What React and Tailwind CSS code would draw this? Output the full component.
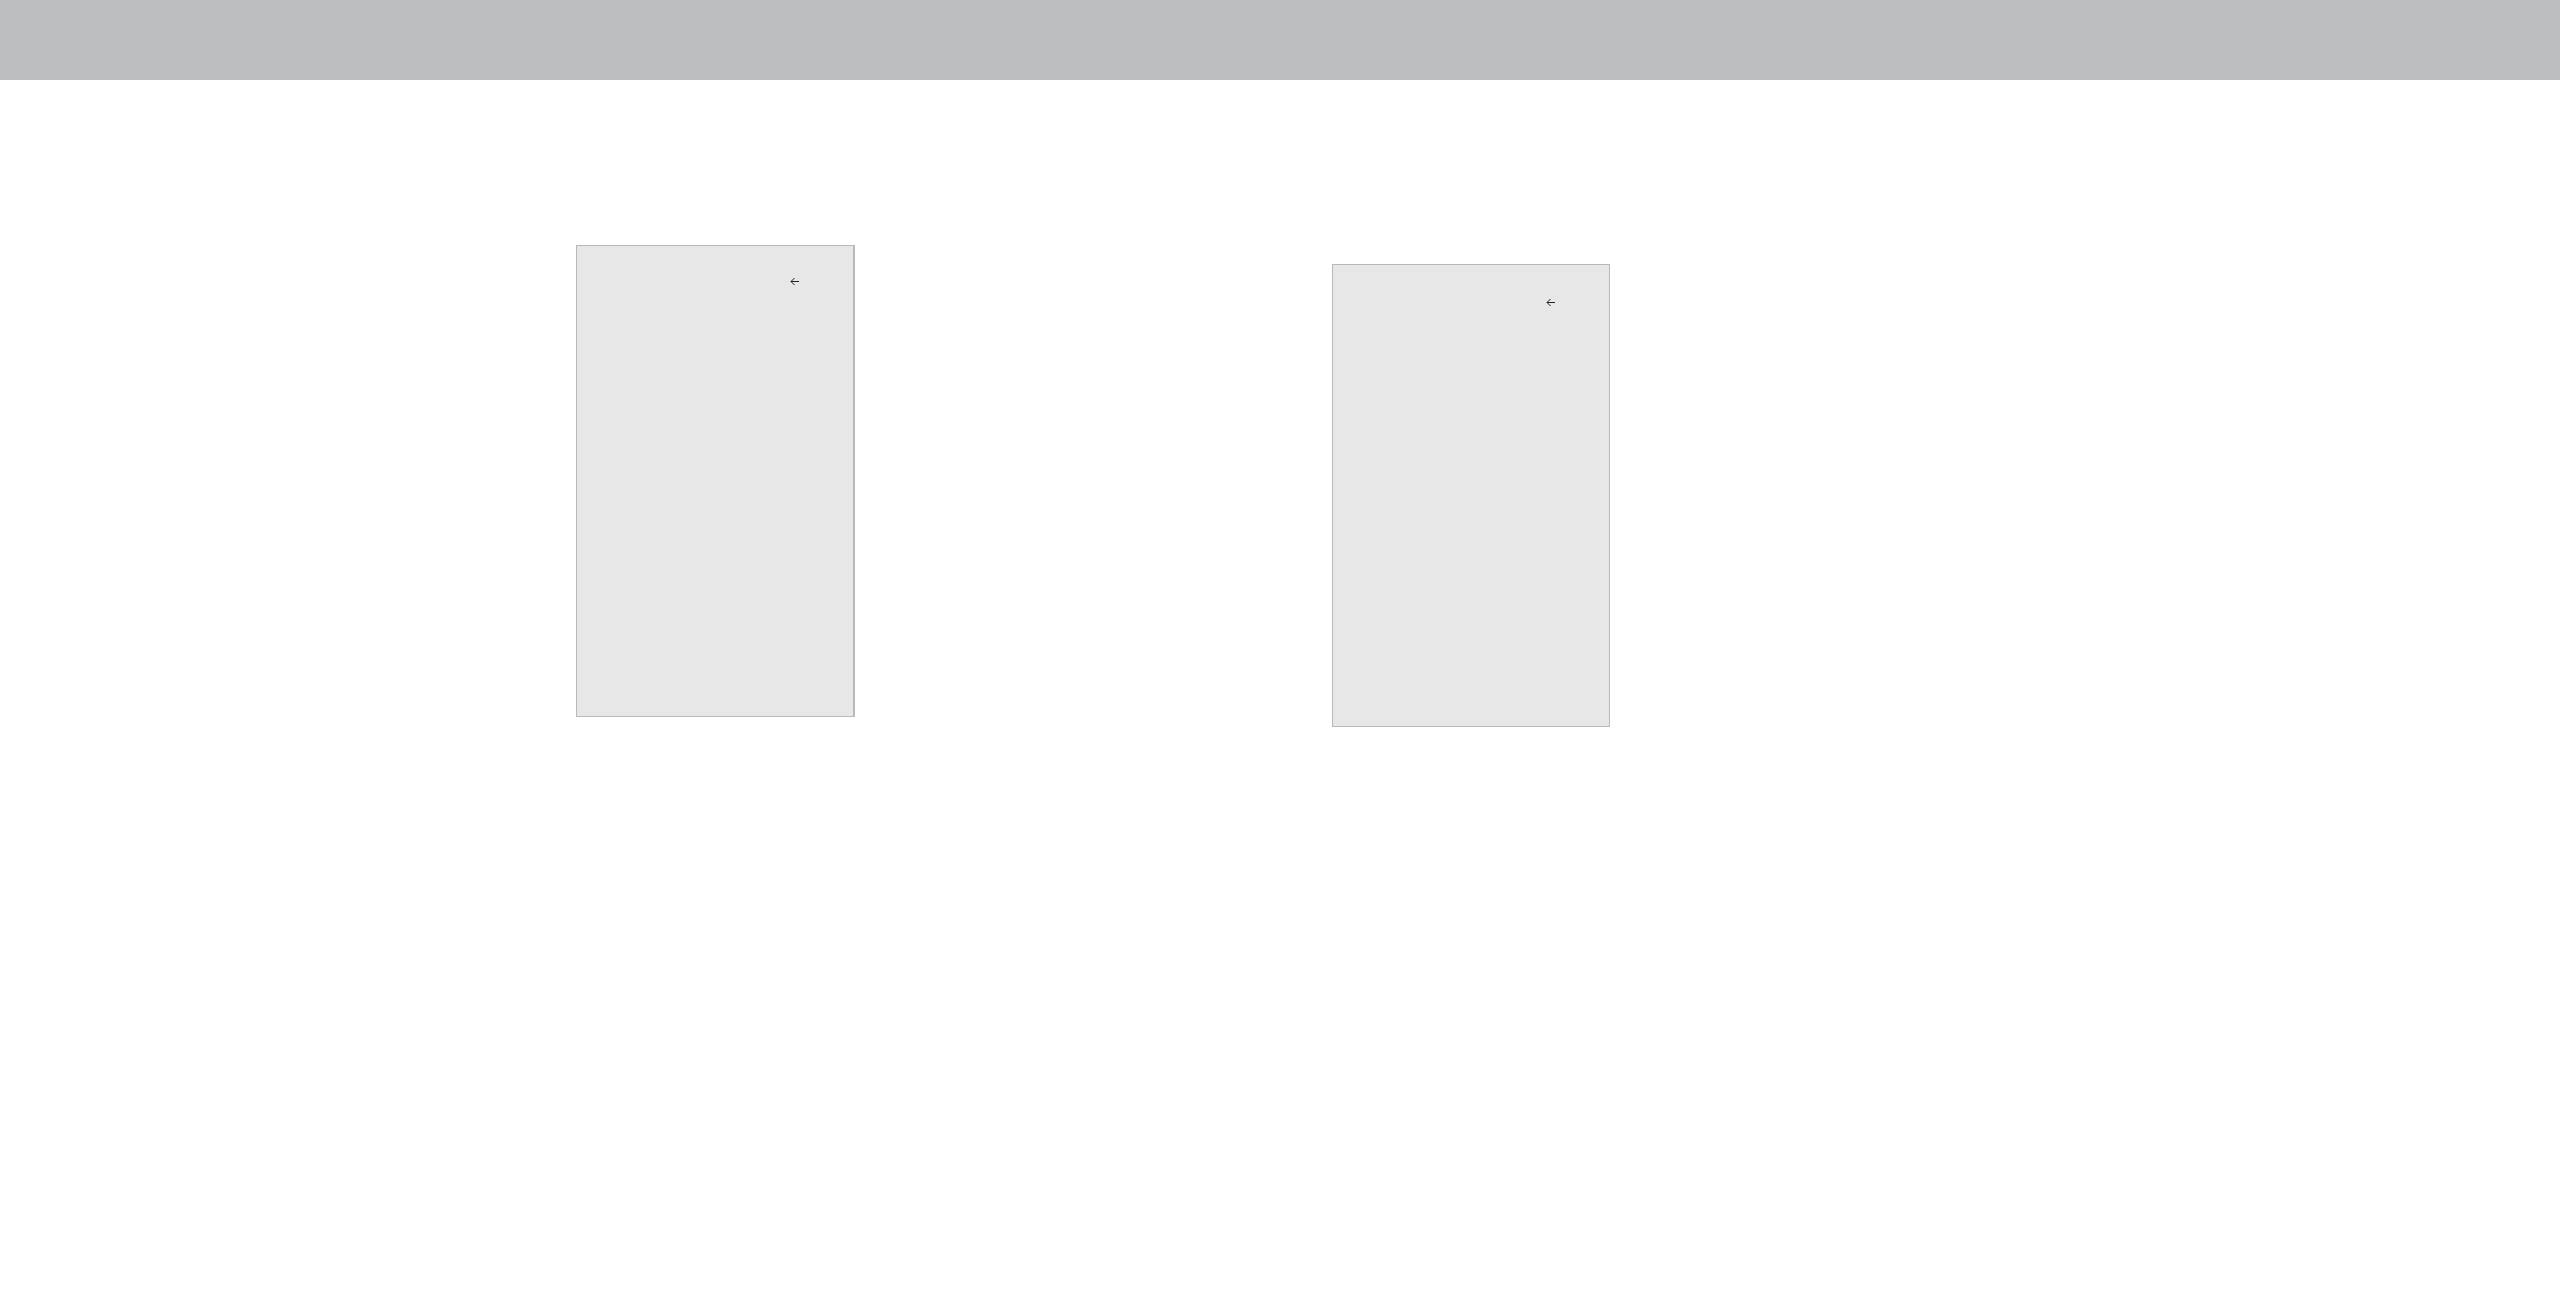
function ArrowLeft() {
  return (
    <svg width="9" height="9" viewBox="0 0 9 9" fill="none" stroke="#222" aria-hidden="true">
      <path d="M1 4.5H9" strokeWidth="1" />
      <path d="M4.5 1L1 4.5L4.5 8" strokeWidth="1" />
    </svg>
  );
}

function Panel({ className }) {
  return (
    <section className={`flex items-start justify-end border border-[#b9b9b9] bg-[#e7e7e7] ${className}`}>
      <button type="button" aria-label="Back" className="block">
        <ArrowLeft />
      </button>
    </section>
  );
}

export default function App() {
  return (
    <div className="min-h-screen bg-white">
      <header className="h-20 bg-[#bdbec0]" />
      <main className="grid grid-cols-[576fr_279fr_477fr_278fr_950fr] items-start pt-[165px]">
        <Panel className="col-start-2 min-h-[472px] border-r-2 pt-[31px] pr-[54px]" />
        <Panel className="col-start-4 mt-[19px] min-h-[463px] pt-[33px] pr-[54px]" />
      </main>
    </div>
  );
}
